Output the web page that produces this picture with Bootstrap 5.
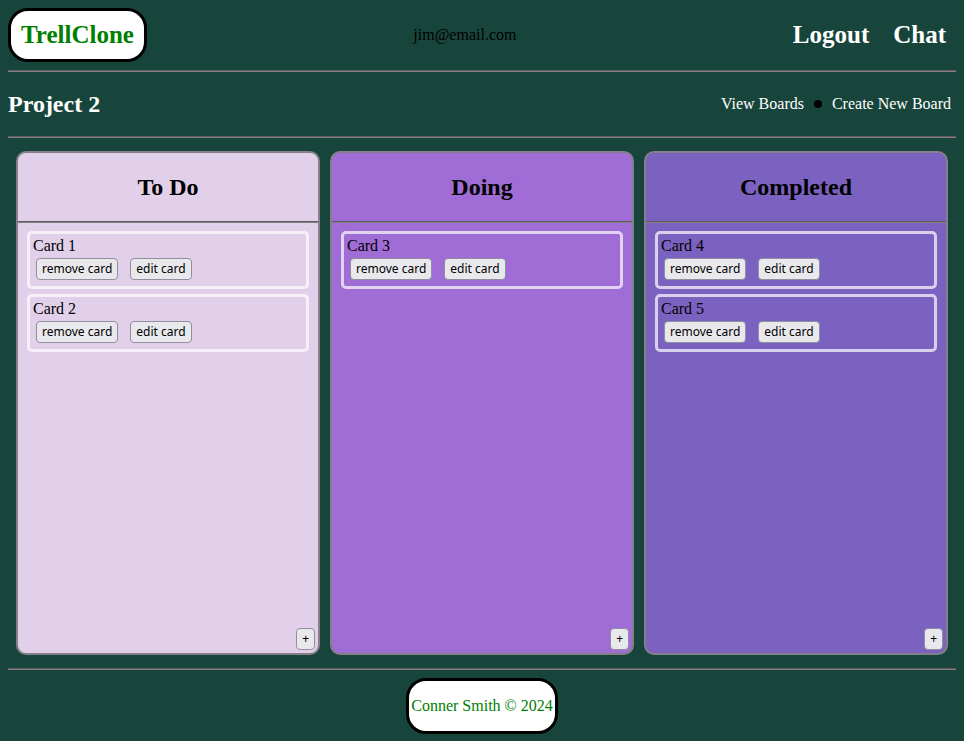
<!DOCTYPE html>
<html lang="en">
<head>
<meta charset="utf-8">
<meta name="viewport" content="width=device-width, initial-scale=1">
<title>TrellClone</title>
<link href="https://cdn.jsdelivr.net/npm/bootstrap@5.3.0/dist/css/bootstrap.min.css" rel="stylesheet">
<style>
  body {
    background: #18453b;
    color: #000;
    font-family: "Liberation Serif", "Times New Roman", serif;
    font-size: 16px;
    line-height: 18px;
    padding: 8px 8px 7px;
  }
  a, a:hover { color: #fff; text-decoration: none; }
  h1, h2 { font-size: 24px; line-height: 28px; font-weight: 700; margin: 0; }
  h1 { color: #fff; }
  h2 { color: #000; }
  .rule {
    border: 0;
    border-top: 1px solid #5e5a60;
    border-bottom: 1px solid #858083;
    opacity: 1;
    margin: 0;
  }
  .pill { background: #fff; border: 3px solid #000; border-radius: 20px; }
  .pill, .pill a { color: #008000; }
  .brand { padding: 10px; }
  .brand a, .top-link { font-size: 25px; line-height: 28px; font-weight: 700; }
  .top-link { padding: 0 10px; }
  .sub-bar { padding: 18px 5px 18px 0; }
  .sub-links { gap: 10px; }
  .dot { width: 8px; height: 8px; background: #000; }
  .board { gap: 10px; padding: 13px 8px; }
  .lane { flex: 1 1 0; border: 2px solid #857f8a; border-radius: 10px; }
  .lane-todo { background: #e2d0ea; }
  .lane-doing { background: #a06cd5; }
  .lane-done { background: #7c62c0; }
  .lane h2 { padding: 20px 0; }
  .lane-list { gap: 5px; padding: 8px 9px; }
  .task { border: 3px solid rgba(255, 255, 255, .7); border-radius: 5px; padding: 3px; }
  .task-actions { gap: 12px; padding: 3px; }
  .tool {
    font-family: "Noto Sans", sans-serif;
    font-size: 12px;
    line-height: 18px;
    color: #000;
    background: #e9e9ed;
    border: 1px solid #8f8f9d;
    border-radius: 4px;
    padding: 1px 5px;
  }
  .add { margin: 3px; }
  .foot { padding-top: 8px; }
  .foot .pill { padding: 16px 2px; }
</style>
</head>
<body class="d-flex flex-column min-vh-100">
<header class="d-flex justify-content-between align-items-center mb-2">
  <div class="pill brand"><a href="#" class="d-block">TrellClone</a></div>
  <span>jim@email.com</span>
  <nav class="d-flex gap-1">
    <a class="top-link" href="#">Logout</a>
    <a class="top-link" href="#">Chat</a>
  </nav>
</header>
<hr class="rule">
<div class="sub-bar d-flex justify-content-between align-items-center">
  <h1>Project 2</h1>
  <nav class="sub-links d-flex align-items-center">
    <a href="#">View Boards</a>
    <span class="dot rounded-circle"></span>
    <a href="#">Create New Board</a>
  </nav>
</div>
<hr class="rule">
<main class="board d-flex flex-grow-1">
  <section class="lane lane-todo d-flex flex-column">
    <h2 class="text-center">To Do</h2>
    <hr class="rule">
    <div class="lane-list d-flex flex-column flex-grow-1">
      <article class="task">
        <div>Card 1</div>
        <div class="task-actions d-flex"><button type="button" class="tool">remove card</button><button type="button" class="tool">edit card</button></div>
      </article>
      <article class="task">
        <div>Card 2</div>
        <div class="task-actions d-flex"><button type="button" class="tool">remove card</button><button type="button" class="tool">edit card</button></div>
      </article>
    </div>
    <button type="button" class="tool add align-self-end">+</button>
  </section>
  <section class="lane lane-doing d-flex flex-column">
    <h2 class="text-center">Doing</h2>
    <hr class="rule">
    <div class="lane-list d-flex flex-column flex-grow-1">
      <article class="task">
        <div>Card 3</div>
        <div class="task-actions d-flex"><button type="button" class="tool">remove card</button><button type="button" class="tool">edit card</button></div>
      </article>
    </div>
    <button type="button" class="tool add align-self-end">+</button>
  </section>
  <section class="lane lane-done d-flex flex-column">
    <h2 class="text-center">Completed</h2>
    <hr class="rule">
    <div class="lane-list d-flex flex-column flex-grow-1">
      <article class="task">
        <div>Card 4</div>
        <div class="task-actions d-flex"><button type="button" class="tool">remove card</button><button type="button" class="tool">edit card</button></div>
      </article>
      <article class="task">
        <div>Card 5</div>
        <div class="task-actions d-flex"><button type="button" class="tool">remove card</button><button type="button" class="tool">edit card</button></div>
      </article>
    </div>
    <button type="button" class="tool add align-self-end">+</button>
  </section>
</main>
<hr class="rule">
<footer class="foot d-flex justify-content-center">
  <div class="pill">Conner Smith © 2024</div>
</footer>
<script src="https://cdn.jsdelivr.net/npm/bootstrap@5.3.0/dist/js/bootstrap.bundle.min.js"></script>
</body>
</html>
